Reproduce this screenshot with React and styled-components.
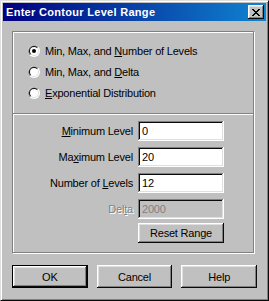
import styled, { createGlobalStyle } from 'styled-components';

const GlobalStyle = createGlobalStyle`
  body {
    margin: 0;
    background: #c0c0c0;
    font-family: "Liberation Sans", Arial, sans-serif;
    font-size: 11px;
    letter-spacing: -0.2px;
    color: #000;
  }
`;

const Window = styled.div`
  width: 269px;
  height: 301px;
  box-sizing: border-box;
  padding: 2px;
  background: #c0c0c0;
  border: 1px solid;
  border-color: #dfdfdf #0a0a0a #0a0a0a #dfdfdf;
  box-shadow: inset 1px 1px #fff, inset -1px -1px #808080;
`;

const TitleBar = styled.div`
  height: 18px;
  display: flex;
  align-items: center;
  justify-content: space-between;
  padding: 0 2px 0 3px;
  background: linear-gradient(90deg, #000080, #1084d0);
`;

const Title = styled.span`
  color: #fff;
  font-weight: bold;
  font-size: 11px;
  letter-spacing: 0.3px;
`;

const CloseButton = styled.div`
  width: 16px;
  height: 14px;
  box-sizing: border-box;
  display: flex;
  align-items: center;
  justify-content: center;
  background: #c0c0c0;
  box-shadow: inset -1px -1px #0a0a0a, inset 1px 1px #fff,
    inset -2px -2px #808080, inset 2px 2px #dfdfdf;
`;

const Body = styled.div`
  padding: 10px 9px 0 9px;
`;

const GroupBox = styled.div`
  width: 242px;
  box-sizing: border-box;
  border: 1px solid #808080;
  box-shadow: inset 1px 1px #fff, 1px 1px #fff;
`;

const RadioList = styled.div`
  padding: 8px 0 10px 15px;
`;

const RadioRow = styled.label`
  height: 21px;
  display: flex;
  align-items: center;
  gap: 5px;
`;

const Divider = styled.div`
  border-top: 1px solid #808080;
  border-bottom: 1px solid #fff;
`;

const FieldGrid = styled.div`
  display: grid;
  grid-template-columns: 120px 86px;
  column-gap: 5px;
  row-gap: 6px;
  padding: 6px 0 9px 0;
`;

const FieldLabel = styled.span`
  text-align: right;
  align-self: center;
  color: ${p => (p.$disabled ? '#808080' : '#000')};
  text-shadow: ${p => (p.$disabled ? '1px 1px #fff' : 'none')};
`;

const TextInput = styled.div`
  height: 20px;
  box-sizing: border-box;
  padding: 0 4px;
  display: flex;
  align-items: center;
  background: ${p => (p.$disabled ? '#c0c0c0' : '#fff')};
  color: ${p => (p.$disabled ? '#808080' : '#000')};
  box-shadow: inset -1px -1px #fff, inset 1px 1px #808080,
    inset -2px -2px #dfdfdf, inset 2px 2px #0a0a0a;
`;

const PushButton = styled.div`
  height: ${p => p.$h || 23}px;
  width: ${p => (p.$w ? `${p.$w}px` : 'auto')};
  box-sizing: border-box;
  display: flex;
  align-items: center;
  justify-content: center;
  background: #c0c0c0;
  border: ${p => (p.$default ? '1px solid #000' : 'none')};
  box-shadow: inset -1px -1px #0a0a0a, inset 1px 1px #fff,
    inset -2px -2px #808080, inset 2px 2px #dfdfdf;
`;

const ResetButton = styled(PushButton)`
  grid-column: 2;
  margin-top: -2px;
`;

const ButtonRow = styled.div`
  display: flex;
  gap: 9px;
  margin-top: 12px;
`;

const Key = styled.u`
  text-decoration: underline;
  text-underline-offset: 1px;
`;

const Radio = ({ checked }) => (
  <svg width="12" height="12" viewBox="0 0 12 12">
    <circle cx="6" cy="6" r="6" fill="#fff" />
    <path d="M1.76 10.24 A6 6 0 0 1 10.24 1.76 Z" fill="#808080" />
    <circle cx="6" cy="6" r="5" fill="#dfdfdf" />
    <path d="M2.46 9.54 A5 5 0 0 1 9.54 2.46 Z" fill="#0a0a0a" />
    <circle cx="6" cy="6" r="4" fill="#fff" />
    {checked && <circle cx="6" cy="6" r="2" fill="#000" />}
  </svg>
);

const CloseIcon = () => (
  <svg width="8" height="7" viewBox="0 0 8 7" shapeRendering="crispEdges">
    <path
      d="M0 0h2v1h-2zM6 0h2v1h-2zM1 1h2v1h-2zM5 1h2v1h-2zM2 2h4v1h-4zM3 3h2v1h-2zM2 4h4v1h-4zM1 5h2v1h-2zM5 5h2v1h-2zM0 6h2v1h-2zM6 6h2v1h-2z"
      fill="#000"
    />
  </svg>
);

const App = () => (
  <>
    <GlobalStyle />
    <Window>
      <TitleBar>
        <Title>Enter Contour Level Range</Title>
        <CloseButton>
          <CloseIcon />
        </CloseButton>
      </TitleBar>
      <Body>
        <GroupBox>
          <RadioList>
            <RadioRow>
              <Radio checked />
              <span>
                Min, Max, and <Key>N</Key>umber of Levels
              </span>
            </RadioRow>
            <RadioRow>
              <Radio />
              <span>
                Min, Max, and <Key>D</Key>elta
              </span>
            </RadioRow>
            <RadioRow>
              <Radio />
              <span>
                <Key>E</Key>xponential Distribution
              </span>
            </RadioRow>
          </RadioList>
          <Divider />
          <FieldGrid>
            <FieldLabel>
              <Key>M</Key>inimum Level
            </FieldLabel>
            <TextInput>0</TextInput>
            <FieldLabel>
              Ma<Key>x</Key>imum Level
            </FieldLabel>
            <TextInput>20</TextInput>
            <FieldLabel>
              Number of <Key>L</Key>evels
            </FieldLabel>
            <TextInput>12</TextInput>
            <FieldLabel $disabled>
              Del<Key>t</Key>a
            </FieldLabel>
            <TextInput $disabled>2000</TextInput>
            <ResetButton $h={20}>Reset Range</ResetButton>
          </FieldGrid>
        </GroupBox>
        <ButtonRow>
          <PushButton $default $w={76}>OK</PushButton>
          <PushButton $w={76}>Cancel</PushButton>
          <PushButton $w={76}>Help</PushButton>
        </ButtonRow>
      </Body>
    </Window>
  </>
);

export default App;
